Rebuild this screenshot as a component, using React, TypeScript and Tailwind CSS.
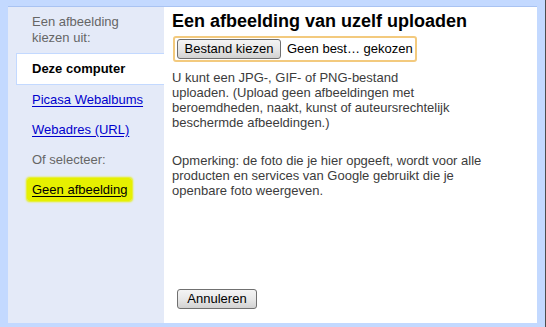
import React from "react";

const sideItem = "h-[30px] leading-[30px] pl-[24px] whitespace-nowrap";
const linkCls = "text-[#0000cc] underline underline-offset-[2px]";
const winBtn =
  "h-[20px] rounded-[3px] border border-[#707070] bg-linear-to-b from-[#f4f4f4] via-[#e8e8e8] to-[#d2d2d2] text-[13px] leading-[18px] text-black";

const Sidebar = () => (
  <div className="w-[156px] shrink-0 bg-[#e4eaf8] pt-[7px] text-[13px]">
    <div className="pl-[24px] leading-[16px] text-[#666]">
      Een afbeelding
      <br />
      kiezen uit:
    </div>
    <div className="mt-[7px] ml-[8px] h-[32px] leading-[30px] bg-white border-y border-l border-[#c3d9ff] pl-[15px] font-bold text-black">
      Deze computer
    </div>
    <div className={sideItem}>
      <a href="#" className={linkCls}>
        Picasa Webalbums
      </a>
    </div>
    <div className={sideItem}>
      <a href="#" className={linkCls}>
        Webadres (URL)
      </a>
    </div>
    <div className={`${sideItem} text-[#666]`}>Of selecteer:</div>
    <div className="h-[30px] leading-[30px] pl-[19px] whitespace-nowrap">
      <a
        href="#"
        className="bg-[#e6f000] px-[5px] py-[4px] rounded-[3px] text-black underline underline-offset-[2px] shadow-[0_0_2px_1px_#e6f000]"
      >
        Geen afbeelding
      </a>
    </div>
  </div>
);

const Main = () => (
  <div className="flex-1 bg-white pl-[8px] pt-[4px] pb-[13px] flex flex-col">
    <h1 className="text-[18px] leading-[21px] font-bold text-black">
      Een afbeelding van uzelf uploaden
    </h1>
    <div className="ml-[1px] mt-[4px] w-[244px] h-[26px] border-2 border-[#f3ca7e] rounded-[3px] flex items-center pl-[2px]">
      <button className={`${winBtn} w-[104px]`}>Bestand kiezen</button>
      <span className="ml-[6px] text-[13px] text-black whitespace-nowrap">
        Geen best… gekozen
      </span>
    </div>
    <p className="mt-[8px] text-[13px] leading-[15px] text-[#3c3c3c] whitespace-nowrap">
      U kunt een JPG-, GIF- of PNG-bestand
      <br />
      uploaden. (Upload geen afbeeldingen met
      <br />
      beroemdheden, naakt, kunst of auteursrechtelijk
      <br />
      beschermde afbeeldingen.)
    </p>
    <p className="mt-[23px] text-[13px] leading-[15px] text-[#3c3c3c] whitespace-nowrap">
      Opmerking: de foto die je hier opgeeft, wordt voor alle
      <br />
      producten en services van Google gebruikt die je
      <br />
      openbare foto weergeven.
    </p>
    <div className="mt-auto pl-[5px]">
      <button className={`${winBtn} w-[80px]`}>Annuleren</button>
    </div>
  </div>
);

export default function App() {
  return (
    <div className="w-[546px] h-[327px] bg-[#c3d9ff] border-r border-[#4d4d4d] pt-[6px] pl-[8px] pr-[8px] pb-[4px] flex font-['Liberation_Sans',Arial,sans-serif]">
      <div className="flex-1 flex border-t border-[#a9c3f2]">
        <Sidebar />
        <Main />
      </div>
    </div>
  );
}
